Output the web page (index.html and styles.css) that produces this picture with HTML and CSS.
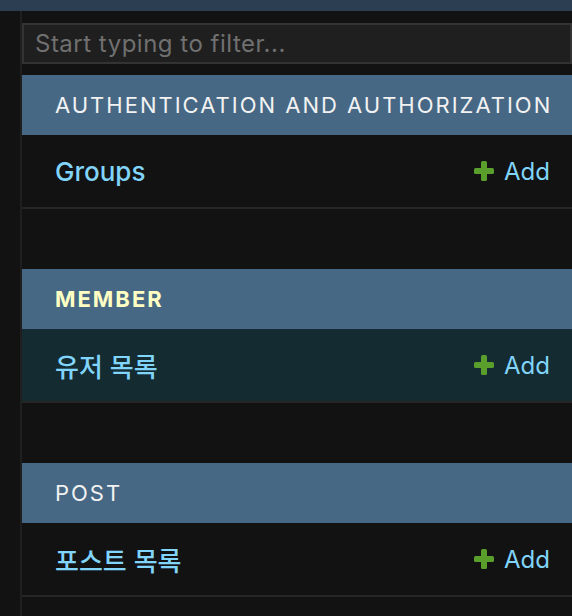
FILE: index.html
```html
<!DOCTYPE html>
<html lang="ko">
<head>
<meta charset="utf-8">
<title>Admin sidebar</title>
<link rel="stylesheet" href="styles.css">
</head>
<body>
<div class="topbar"></div>
<div class="layout">
  <div class="gutter"></div>
  <nav class="sidebar">
    <input class="filter" type="search" placeholder="Start typing to filter...">
    <section class="module">
      <div class="caption">Authentication and Authorization</div>
      <div class="row">
        <a class="model" href="#">Groups</a>
        <a class="add" href="#"><svg class="plus" viewBox="0 0 20 20" width="20" height="20"><rect x="0" y="7" width="20" height="6" rx="1.6"/><rect x="7" y="0" width="6" height="20" rx="1.6"/></svg><span>Add</span></a>
      </div>
    </section>
    <section class="module current">
      <div class="caption">Member</div>
      <div class="row">
        <a class="model" href="#">유저 목록</a>
        <a class="add" href="#"><svg class="plus" viewBox="0 0 20 20" width="20" height="20"><rect x="0" y="7" width="20" height="6" rx="1.6"/><rect x="7" y="0" width="6" height="20" rx="1.6"/></svg><span>Add</span></a>
      </div>
    </section>
    <section class="module">
      <div class="caption">Post</div>
      <div class="row">
        <a class="model" href="#">포스트 목록</a>
        <a class="add" href="#"><svg class="plus" viewBox="0 0 20 20" width="20" height="20"><rect x="0" y="7" width="20" height="6" rx="1.6"/><rect x="7" y="0" width="6" height="20" rx="1.6"/></svg><span>Add</span></a>
      </div>
    </section>
  </nav>
</div>
</body>
</html>
```
FILE: styles.css
```css
html, body {
  margin: 0;
  padding: 0;
  background: #121212;
  font-family: Inter, "Noto Sans CJK KR", sans-serif;
  overflow: hidden;
}
.topbar {
  height: 11px;
  background: #2c3e52;
}
.layout {
  display: flex;
  height: 605px;
}
.gutter {
  width: 20px;
  flex: none;
  background: #121212;
}
.sidebar {
  flex: 1;
  border-left: 2px solid #1f1f1f;
  padding-top: 12px;
  display: flex;
  flex-direction: column;
}
.filter {
  box-sizing: border-box;
  width: 100%;
  height: 41px;
  margin: 0 0 11px 0;
  border: 2px solid #333333;
  background: #1f1f1f;
  color: #ddd;
  font-family: Inter, sans-serif;
  font-size: 24px;
  letter-spacing: 0.5px;
  padding: 0 11px;
  outline: none;
}
.filter::placeholder {
  color: #707070;
}
.module {
  margin-bottom: 60px;
}
.module:last-child {
  margin-bottom: 0;
}
.caption {
  height: 60px;
  display: flex;
  align-items: center;
  padding-left: 33px;
  background: #466884;
  color: #f2f2f2;
  font-size: 22px;
  letter-spacing: 2px;
  text-transform: uppercase;
}
.current .caption {
  color: #ffffc4;
  font-weight: 700;
}
.row {
  height: 72px;
  display: flex;
  align-items: center;
  justify-content: space-between;
  padding: 0 22px 0 33px;
  border-bottom: 2px solid #262626;
}
.current .row {
  background: #132b31;
}
.model {
  color: #81d4fa;
  text-decoration: none;
  font-size: 26px;
  font-weight: 500;
  font-family: Inter, "Noto Sans CJK KR", sans-serif;
}
.add {
  display: flex;
  align-items: center;
  gap: 10px;
  color: #81d4fa;
  text-decoration: none;
  font-size: 24px;
}
.plus {
  fill: #5a9e2b;
  display: block;
}
```
